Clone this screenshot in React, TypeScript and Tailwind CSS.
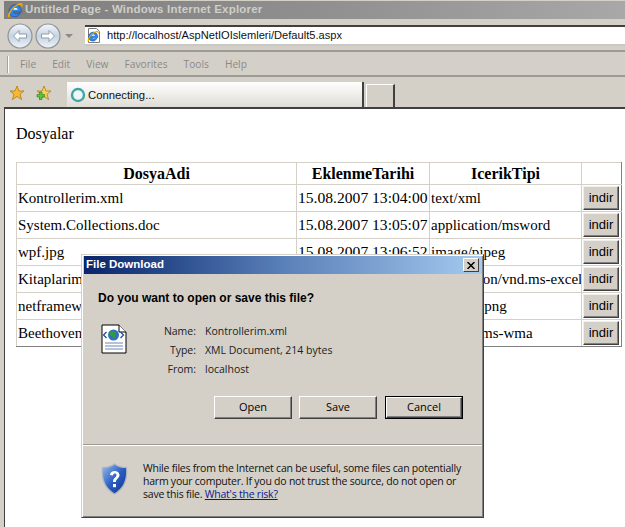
import * as React from 'react';

const rows = [
  ['Kontrollerim.xml', '15.08.2007 13:04:00', 'text/xml'],
  ['System.Collections.doc', '15.08.2007 13:05:07', 'application/msword'],
  ['wpf.jpg', '15.08.2007 13:06:52', 'image/pjpeg'],
  ['Kitaplarim.xls', '15.08.2007 13:07:11', 'application/vnd.ms-excel'],
  ['netframework.png', '15.08.2007 13:08:25', 'image/x-png'],
  ['Beethoven.wma', '15.08.2007 13:09:40', 'audio/x-ms-wma'],
];

const IeLogo = ({ size }: { size: number }) => (
  <svg width={size} height={size} viewBox="0 0 16 16" className="shrink-0">
    <path d="M2 9.500C2 5.800 4.900 2.800 8.500 2.800S14.500 5.800 14.500 10H6.500C6.700 11.900 9.900 12.300 13.300 10.700C12.500 13.400 10.200 14.800 8 14.800C4.500 14.800 2 12.400 2 9.500Z" fill="#2f86e8" stroke="#1450a8" strokeWidth="0.7" />
    <path d="M6.300 7.800C6.500 5.500 10.500 5.500 10.700 7.800Z" fill="#fff" />
    <path d="M1 15C-0.300 11 7 2.800 13 1C15.900 0.400 16.200 3.500 14.800 6.200C14.900 3.500 13.500 2.700 12 3.100C7.500 4.300 2.500 10.500 2.800 13.500C3 14.800 1.500 15.800 1 15Z" fill="#f5a800" />
  </svg>
);

const PageIe = () => (
  <div className="relative w-[14px] h-[15px] shrink-0">
    <svg width="14" height="15" viewBox="0 0 14 15" className="absolute inset-0">
      <path d="M1.500 0.500H9.500L12.500 3.500V14.500H1.500Z" fill="#fff" stroke="#7a7a7a" />
    </svg>
    <div className="absolute left-0 top-[2px]"><IeLogo size={12} /></div>
  </div>
);

const NavButton = ({ flip }: { flip?: boolean }) => (
  <svg width="26" height="26" viewBox="0 0 26 26">
    <defs>
      <linearGradient id={flip ? 'nf' : 'nb'} x1="0" y1="0" x2="0" y2="1">
        <stop offset="0" stopColor="#f4f7fb" />
        <stop offset="0.5" stopColor="#c5d3e2" />
        <stop offset="1" stopColor="#eef3f8" />
      </linearGradient>
    </defs>
    <circle cx="13" cy="13" r="12" fill={`url(#${flip ? 'nf' : 'nb'})`} stroke="#8f9499" strokeWidth="1.200" />
    <g transform={flip ? 'rotate(180 13 13)' : undefined}>
      <path d="M6.500 13L12 7.500V11H19.500V15H12V18.500Z" fill="#fff" stroke="#8e9cab" strokeWidth="1" strokeLinejoin="round" />
    </g>
  </svg>
);

const Star = ({ plus }: { plus?: boolean }) => (
  <svg width="16" height="16" viewBox="0 0 16 16">
    <path d="M8 1L10 6H15L11 9.200L12.600 14.600L8 11.400L3.400 14.600L5 9.200L1 6H6Z" fill={plus ? '#f5d35a' : '#f7b92e'} stroke="#b8780f" strokeWidth="0.8" />
    {plus && <path d="M1 9.500H3.500V7H6V9.500H8.500V12H6V14.500H3.500V12H1Z" fill="#5cc43c" stroke="#2c7d1c" strokeWidth="0.6" />}
  </svg>
);

const DocGlobe = () => (
  <svg width="26" height="30" viewBox="0 0 26 30" className="shrink-0 mt-[1px]">
    <path d="M1 1H18L25 8V29H1Z" fill="#fff" stroke="#000" />
    <path d="M18 1V8H25" fill="#fff" stroke="#000" />
    <circle cx="12.500" cy="11" r="5.500" fill="#2f6fc8" />
    <path d="M9 8C11 6.500 14 7 15 9C14 11 15 13 13 15C11 14 12 12 10 12C8.500 11 8.500 9.500 9 8Z" fill="#2f9a3e" />
    <path d="M5.500 8L2.500 11L5.500 14M19.500 8L22.500 11L19.500 14" fill="none" stroke="#2c4a9c" strokeWidth="1.300" />
    <path d="M4 19H22M4 22H22M4 25H22" stroke="#6d86b5" strokeWidth="1" />
  </svg>
);

const Shield = () => (
  <svg width="27" height="32" viewBox="0 0 27 32" className="shrink-0">
    <defs>
      <linearGradient id="sh" x1="0" y1="0" x2="1" y2="1">
        <stop offset="0" stopColor="#9cc0ee" />
        <stop offset="0.5" stopColor="#2a5fc4" />
        <stop offset="1" stopColor="#12308c" />
      </linearGradient>
    </defs>
    <path d="M13.500 1C17 4 21 4.500 25.500 4.500C26.500 15 24 25 13.500 31C3 25 0.500 15 1.500 4.500C6 4.500 10 4 13.500 1Z" fill="url(#sh)" stroke="#a9b4c4" strokeWidth="1.200" />
    <path d="M9 12C9 6.500 18.500 6.500 18.500 12C18.500 15.500 15 15.500 15 19H12C12 14.500 15.500 14.500 15.500 12C15.500 10 12 10 12 12.500Z" fill="#fff" />
    <rect x="12" y="21" width="3" height="3.200" fill="#fff" />
  </svg>
);

const DlgButton = ({ label, isDefault }: { label: string; isDefault?: boolean }) => (
  <div className={isDefault ? 'border border-black' : ''}>
    <div className={`flex items-center justify-center bg-[#d4d0c8] border border-t-white border-l-white border-r-[#404040] border-b-[#404040] text-[11px] text-black shadow-[inset_-1px_-1px_0_#808080] ${isDefault ? 'w-[76px] h-[21px]' : 'w-[78px] h-[23px]'}`}>
      {label}
    </div>
  </div>
);

export default function App() {
  return (
    <div className="w-[625px] h-[527px] overflow-hidden bg-[#d4d0c8] flex flex-col relative font-['Open_Sans','Liberation_Sans',sans-serif]">
      {/* title bar */}
      <div className="h-[18px] mt-[1px] ml-[4px] pl-[3px] flex items-center bg-gradient-to-r from-[#7f7f7f] via-[#8f8f8f] to-[#a8a8a8]">
        <IeLogo size={16} />
        <span className="ml-[2px] text-[11.500px] font-bold text-[#d0cec8] font-['Liberation_Sans',sans-serif] tracking-[0.2px]">Untitled Page - Windows Internet Explorer</span>
      </div>

      {/* address row */}
      <div className="h-[33px] flex items-center pl-[7px] pt-[2px] border-b-2 border-[#9c9a94]">
        <NavButton />
        <div className="ml-[2px]"><NavButton flip /></div>
        <div className="ml-[4px] w-0 h-0 border-x-[4px] border-x-transparent border-t-[4px] border-t-[#8a8a8a]" />
        <div className="ml-[12px] flex-1 h-[21px] bg-white flex items-center border-t-2 border-t-[#404040] border-b-2 border-b-[#c8c8c4] pl-[2px] text-[11.100px] text-[#101010]">
          <PageIe />
          <span className="ml-[6px] font-['Liberation_Sans',sans-serif]">http://localhost/AspNetIOIslemleri/Default5.aspx</span>
        </div>
      </div>

      {/* menu row */}
      <div className="h-[25px] flex items-center border-b-2 border-[#9c9a94] pl-[7px] pt-[2px] text-[10.200px] text-[#8a8a88]">
        <div className="w-[2px] h-[17px] bg-[#a5a39d] border-r border-white mr-[11px]" />
        <div className="flex gap-[16px]">
          <span>File</span><span>Edit</span><span>View</span><span>Favorites</span><span>Tools</span><span>Help</span>
        </div>
      </div>

      {/* tab row */}
      <div className="h-[30px] flex items-end">
        <div className="flex self-center mt-[2px] ml-[9px] gap-[11px] w-[58px] shrink-0">
          <Star /><Star plus />
        </div>
        <div className="w-[297px] h-[25px] bg-gradient-to-b from-white to-[#dedcd5] flex items-center border-r-2 border-[#404040] pl-[3px] pt-[1px]">
          <svg width="16" height="16" viewBox="0 0 16 16">
            <circle cx="8" cy="8" r="6" fill="#eef6f6" stroke="#3fa6a6" strokeWidth="2.400" />
          </svg>
          <span className="ml-[2px] text-[11.300px] text-[#101010] font-['Liberation_Sans',sans-serif]">Connecting...</span>
        </div>
        <div className="ml-[2px] w-[29px] h-[23px] border-l border-t border-white border-r-2 border-r-[#404040]" />
      </div>

      {/* page */}
      <div className="flex-1 ml-[4px] bg-white border-l border-t-2 border-[#404040] pl-[11px] pt-[16px] font-['Liberation_Serif',serif] text-[16px] text-black">
        <div className="h-[18px] leading-[18px]">Dosyalar</div>
        <table className="mt-[19px] w-[605px] table-fixed border-collapse">
          <colgroup>
            <col className="w-[280px]" />
            <col className="w-[133px]" />
            <col className="w-[152px]" />
            <col className="w-[40px]" />
          </colgroup>
          <thead>
            <tr className="h-[22px] leading-[18px]">
              {['DosyaAdi', 'EklenmeTarihi', 'IcerikTipi', ''].map((h, i) => (
                <th key={i} className="border border-[#d4d0c8] last:border-r-[#808080] p-0 font-bold text-center">{h}</th>
              ))}
            </tr>
          </thead>
          <tbody>
            {rows.map((r, i) => (
              <tr key={r[0]} className="h-[27px] leading-[18px]">
                <td className={`border border-[#d4d0c8] px-px py-0 whitespace-nowrap overflow-hidden text-[15px] ${i === 5 ? 'border-b-[#808080]' : ''}`}>{r[0]}</td>
                <td className={`border border-[#d4d0c8] px-px py-0 whitespace-nowrap overflow-hidden text-[15.600px] ${i === 5 ? 'border-b-[#808080]' : ''}`}>{r[1]}</td>
                <td className={`border border-[#d4d0c8] px-px py-0 whitespace-nowrap overflow-hidden text-[15px] ${i === 5 ? 'border-b-[#808080]' : ''}`}>{r[2]}</td>
                <td className={`border border-[#d4d0c8] border-r-[#808080] px-px py-0 ${i === 5 ? 'border-b-[#808080]' : ''}`}>
                  <div className="w-[36px] h-[24px] bg-[#d4d0c8] border border-t-[#eeeeee] border-l-[#eeeeee] border-r-[#404040] border-b-[#404040] shadow-[inset_-1px_-1px_0_#808080] flex items-center justify-center text-[13px] text-black font-['Liberation_Sans',sans-serif]">indir</div>
                </td>
              </tr>
            ))}
          </tbody>
        </table>
      </div>

      {/* file download dialog */}
      <div className="absolute left-[81px] top-[254px] w-[403px] h-[264px] bg-[#d4d0c8] border border-t-[#d4d0c8] border-l-[#d4d0c8] border-r-[#404040] border-b-[#404040] shadow-[inset_1px_1px_0_#fff,inset_-1px_-1px_0_#808080] p-[1px] flex flex-col">
        <div className="h-[18px] ml-px bg-gradient-to-r from-[#0a246a] via-[#5a80b8] to-[#a6caf0] flex items-center justify-between pl-[2px] pr-[3px] shrink-0">
          <span className="text-[11.500px] font-bold text-white font-['Liberation_Sans',sans-serif]">File Download</span>
          <div className="w-[16px] h-[14px] bg-[#d4d0c8] border border-t-white border-l-white border-r-[#404040] border-b-[#404040] flex items-center justify-center">
            <svg width="8" height="7" viewBox="0 0 8 7"><path d="M0.500 0L7.500 7M7.500 0L0.500 7" stroke="#000" strokeWidth="1.500" /></svg>
          </div>
        </div>
        <div className="pl-[15px] pt-[15px] text-[12px] font-bold text-black font-['Liberation_Sans',sans-serif] leading-[18px]">Do you want to open or save this file?</div>
        <div className="flex pl-[18px] pt-[16px] text-[#202020] text-[10.500px]">
          <DocGlobe />
          <div className="ml-[31px] flex flex-col gap-[3px] w-[38px] text-right leading-[16px]">
            <span>Name:</span><span>Type:</span><span>From:</span>
          </div>
          <div className="ml-[9px] flex flex-col gap-[3px] leading-[16px]">
            <span>Kontrollerim.xml</span><span>XML Document, 214 bytes</span><span>localhost</span>
          </div>
        </div>
        <div className="flex gap-[7px] pl-[131px] pt-[19px] items-center">
          <DlgButton label="Open" />
          <DlgButton label="Save" />
          <div className="ml-px"><DlgButton label="Cancel" isDefault /></div>
        </div>
        <div className="mt-[25px] h-[2px] bg-[#9c9a94] border-b border-white" />
        <div className="flex pl-[18px] pt-[17px]">
          <Shield />
          <p className="ml-[15px] text-[10.500px] leading-[13px] text-[#101010] tracking-[-0.23px] -mt-px whitespace-nowrap">
            While files from the Internet can be useful, some files can potentially<br />
            harm your computer. If you do not trust the source, do not open or<br />
            save this file. <span className="text-[#0a1a8c] underline">What's the risk?</span>
          </p>
        </div>
      </div>
    </div>
  );
}
